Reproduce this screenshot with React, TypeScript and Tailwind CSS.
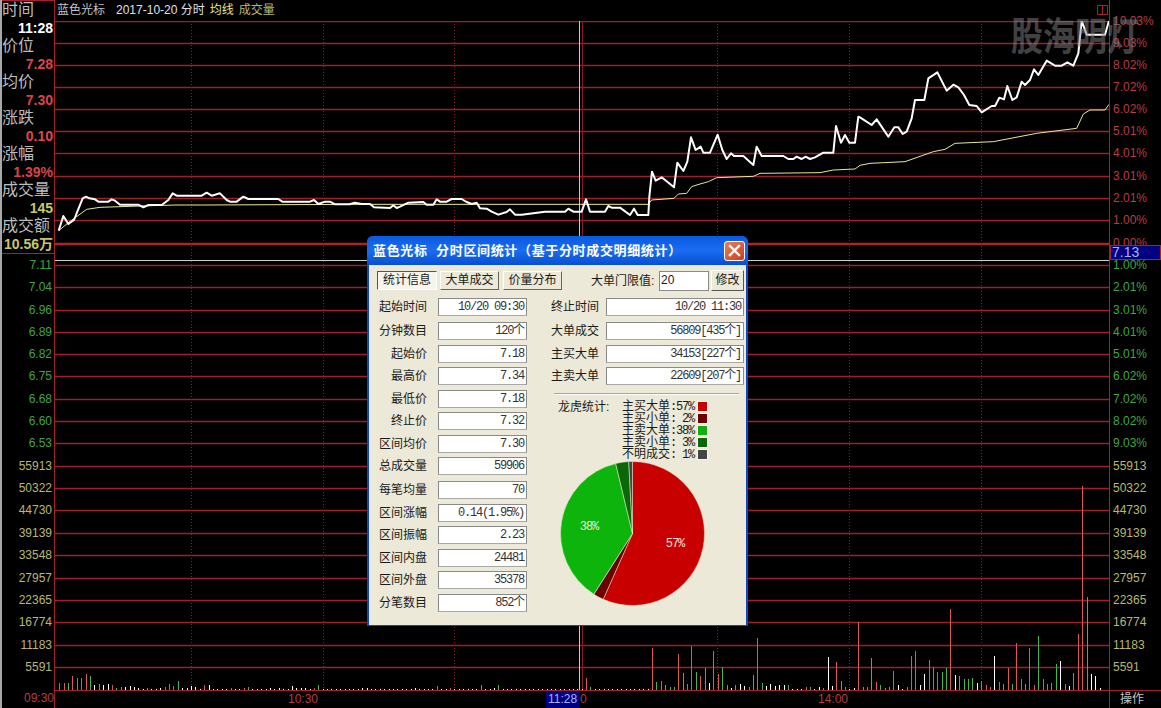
const cjk = { fontFamily: '"Liberation Sans","Noto Sans CJK SC",sans-serif' };

type P = [number, number];
const z = (ox: number, oy: number, a: P[]): P[] => a.map(([x, y]) => [ox + x / 3, oy + y / 3]);

const price: P[] = [
  ...z(0, 0, [[176,692],[190,648],[205,672],[222,660],[232,635],[248,595],[258,590],[268,595],[285,598],[295,605],[325,605],[335,598],[345,602],[360,614],[415,614],[430,622],[445,615],[485,615],[505,600],[518,580],[530,587],[605,587],[620,578],[635,587],[660,580],[680,600],[690,605],[710,605],[730,590],[745,597],[835,597],[847,605],[930,605],[942,600],[955,612],[975,605],[990,605],[1005,613],[1050,613]]),
  ...z(350, 180, [[0,72],[15,68],[35,72],[60,72],[72,82],[120,84],[130,76],[140,84],[150,80],[175,68],[220,66],[230,74],[250,74],[260,58],[270,65],[290,65],[305,57],[335,57],[350,66],[365,72],[380,68],[390,85],[410,86],[425,95],[445,104],[470,96],[480,88],[495,104],[515,104]]),
  ...z(540, 100, [[15,335],[75,335],[85,326],[100,335],[125,335],[138,298],[150,335],[195,335],[205,318],[215,323],[240,323],[270,345],[282,326],[293,345],[325,345],[328,290],[336,215],[347,242],[365,232],[402,262],[412,188],[430,213],[442,185],[453,112],[467,150],[482,140],[490,158],[510,158],[533,104],[547,150],[560,177],[573,160],[582,168],[610,168],[640,195],[650,140],[665,168],[730,168],[745,177],[760,177],[770,170],[785,177],[797,170],[810,177],[825,172],[850,158],[880,158],[888,78],[903,128],[915,105],[928,128],[945,128],[955,50]]),
  ...z(860, 0, [[0,352],[35,375],[50,358],[85,410],[103,382],[115,382],[128,402],[140,395],[155,355],[165,300],[193,300],[205,235],[232,217],[260,272],[280,254],[295,262],[312,285],[328,315],[350,318],[365,337],[395,318],[405,318],[418,293],[432,298],[442,258],[457,300],[470,292],[485,245],[495,255],[510,240],[522,208],[535,225],[560,182],[585,197],[605,197],[622,187],[640,197],[655,160],[665,62],[680,104],[735,104],[747,62]]),
];

const avg: P[] = [
  ...z(0, 0, [[176,692],[205,668],[260,628],[300,622],[420,618],[525,615],[605,615],[1080,613]]),
  ...z(540, 100, [[0,313],[325,313],[335,300],[402,295],[415,282],[440,280],[455,260],[480,252],[505,245],[530,233],[640,229],[660,220],[840,218],[880,210],[945,207],[960,196]]),
  ...z(860, 0, [[30,490],[135,485],[220,455],[255,448],[285,430],[400,425],[530,400],[650,385],[670,342],[690,330],[735,330],[747,313]]),
];

const raw: [number, number, string][] = [
  [0,22,'r'],[1,20,'r'],[2,20,'g'],[3,42,'r'],[4,36,'r'],[5,36,'r'],[6,48,'r'],[7,42,'g'],[8,15,'w'],[9,18,'g'],[10,15,'w'],[11,18,'w'],[12,15,'r'],[13,7,'g'],[14,9,'g'],[15,9,'w'],[16,12,'w'],[17,9,'w'],[18,6,'w'],[20,6,'r'],[23,5,'w'],[24,10,'r'],[25,18,'r'],[26,12,'r'],[27,26,'g'],[28,6,'w'],[29,6,'w'],[30,12,'w'],[31,9,'w'],[33,16,'r'],[34,15,'w'],[39,6,'g'],[42,6,'r'],[43,9,'g'],[48,6,'w'],[50,6,'w'],[53,12,'w'],[54,6,'w'],[55,6,'w'],[56,6,'w'],[58,6,'r'],[59,15,'g'],[69,6,'w'],[70,6,'w'],[81,6,'w'],[86,12,'r'],[89,6,'r'],[96,15,'g'],[99,6,'w'],[100,15,'g'],
  [120,36,'r'],[121,9,'g'],[135,125,'r'],[136,24,'g'],[137,27,'r'],[138,15,'g'],[139,9,'g'],[140,9,'g'],[141,108,'r'],[142,51,'g'],[143,18,'r'],[144,132,'r'],[145,54,'g'],[146,42,'r'],[147,66,'g'],[148,21,'w'],[149,117,'r'],[150,48,'r'],[151,69,'g'],[152,15,'g'],[153,6,'w'],[154,15,'g'],[155,18,'w'],[156,12,'w'],[157,9,'g'],[158,45,'g'],[159,156,'r'],[160,21,'g'],[161,12,'w'],[162,18,'w'],[163,12,'w'],[164,15,'w'],[165,15,'w'],[166,15,'g'],[170,9,'r'],[171,9,'g'],[173,9,'w'],[174,6,'r'],[175,99,'w'],[176,12,'w'],[177,84,'r'],[178,27,'g'],[179,9,'r'],[181,6,'w'],[182,205,'r'],
  [183,9,'g'],[184,9,'g'],[185,96,'g'],[186,24,'r'],[187,15,'g'],[188,6,'g'],[189,9,'g'],[190,57,'r'],[191,15,'w'],[193,9,'r'],[194,102,'r'],[195,117,'r'],[196,15,'w'],[197,48,'w'],[198,90,'r'],[199,69,'r'],[200,54,'r'],[201,54,'g'],[202,66,'g'],[203,243,'r'],[204,45,'w'],[205,42,'g'],[206,33,'g'],[207,33,'g'],[208,36,'g'],[209,21,'w'],[210,27,'g'],[211,15,'r'],[212,9,'r'],[213,102,'w'],[214,24,'r'],[215,18,'g'],[216,66,'r'],[217,18,'g'],[218,141,'r'],[219,33,'r'],[220,18,'g'],[221,126,'r'],[222,15,'r'],[223,162,'g'],[224,33,'r'],[225,18,'r'],[226,21,'g'],[227,78,'g'],[228,87,'w'],[229,18,'r'],[230,12,'w'],[231,51,'g'],[232,168,'r'],[233,612,'r'],[234,279,'g'],[235,48,'w'],[236,42,'w'],[237,6,'w'],
];
const barMap = new Map(raw.map(([i, h, c]) => [i, [h, c] as const]));
const barColor: Record<string, string> = { r: '#e25555', g: '#3fb84f', w: '#ffffff' };
const bars = Array.from({ length: 238 }, (_, i) => {
  const b = barMap.get(i) ?? ([4, 'w'] as const);
  return { x: Math.round(59.3 + 4.39 * i) + 0.5, h: b[0] / 3, c: barColor[b[1]] };
});

const gridY = [21,43,65,87,109,131,153,176,198,220,265,287,310,332,354,376,399,421,443,466,488,510,533,555,578,600,622,645,667];
const dotted = [191,323,454,717,849,981];

const info: [string, string, string][] = [
  ['时间', '11:28', 'text-white'],
  ['价位', '7.28', 'text-[#d8444c]'],
  ['均价', '7.30', 'text-[#d8444c]'],
  ['涨跌', '0.10', 'text-[#e2454c]'],
  ['涨幅', '1.39%', 'text-[#d8444c]'],
  ['成交量', '145', 'text-[#c8c868]'],
  ['成交额', '10.56万', 'text-[#c8c868]'],
];

const leftAxis: [string, string, string][] = [
  ['7.11','h-[22px]','text-[#3fa544]'],['7.04','h-[23px]','text-[#3fa544]'],['6.96','h-[22px]','text-[#3fa544]'],['6.89','h-[22px]','text-[#3fa544]'],['6.82','h-[22px]','text-[#3fa544]'],['6.75','h-[23px]','text-[#3fa544]'],['6.68','h-[22px]','text-[#3fa544]'],['6.60','h-[22px]','text-[#3fa544]'],['6.53','h-[23px]','text-[#3fa544]'],
  ['55913','h-[22px]','text-[#b8b870]'],['50322','h-[22px]','text-[#b8b870]'],['44730','h-[23px]','text-[#b8b870]'],['39139','h-[22px]','text-[#b8b870]'],['33548','h-[23px]','text-[#b8b870]'],['27957','h-[22px]','text-[#b8b870]'],['22365','h-[22px]','text-[#b8b870]'],['16774','h-[23px]','text-[#b8b870]'],['11183','h-[22px]','text-[#b8b870]'],['5591','h-[22px]','text-[#b8b870]'],
];
const rightLower: [string, string, string][] = leftAxis.map((r, i) =>
  i < 9 ? [['1.00%','2.01%','3.01%','4.01%','5.01%','6.02%','7.02%','8.02%','9.03%'][i], r[1], r[2]] : r
);
const rightTop: [string, string][] = [
  ['10.03%','h-[22px]'],['9.03%','h-[22px]'],['8.02%','h-[22px]'],['7.02%','h-[22px]'],['6.02%','h-[22px]'],['5.01%','h-[22px]'],['4.01%','h-[23px]'],['3.01%','h-[22px]'],['2.01%','h-[22px]'],['1.00%','h-[23px]'],['0.00%','h-[12px]'],
];

const leftRows: [string, string, string][] = [
  ['起始时间','10/20 09:30','h-[24px]'],['分钟数目','120个','h-[23px]'],['起始价','7.18','h-[22px]'],['最高价','7.34','h-[23px]'],['最低价','7.18','h-[22px]'],['终止价','7.32','h-[23px]'],['区间均价','7.30','h-[22px]'],['总成交量','59906','h-[24px]'],['每笔均量','70','h-[23px]'],['区间涨幅','0.14(1.95%)','h-[22px]'],['区间振幅','2.23','h-[23px]'],['区间内盘','24481','h-[22px]'],['区间外盘','35378','h-[23px]'],['分笔数目','852个','h-[18px]'],
];
const rightRows: [string, string, string][] = [
  ['终止时间','10/20 11:30','h-[24px]'],['大单成交','56809[435个]','h-[23px]'],['主买大单','34153[227个]','h-[22px]'],['主卖大单','22609[207个]','h-[18px]'],
];
const legend: [string, string][] = [
  ['主买大单:57%','bg-[#c80000]'],['主买小单: 2%','bg-[#6a0000]'],['主卖大单:38%','bg-[#10b010]'],['主卖小单: 3%','bg-[#0a680a]'],['不明成交: 1%','bg-[#444444]'],
];

const CX = 632.5, CY = 532.5, R = 72;
const pol = (deg: number): P => {
  const a = (deg * Math.PI) / 180;
  return [CX + R * Math.sin(a), CY - R * Math.cos(a)];
};
const slice = (a: number, b: number) => {
  const [x1, y1] = pol(a);
  const [x2, y2] = pol(b);
  return `M${CX} ${CY}L${x1} ${y1}A${R} ${R} 0 ${b - a > 180 ? 1 : 0} 1 ${x2} ${y2}Z`;
};

function Field({ v, w }: { v: string; w: string }) {
  return (
    <div
      className={`${w} h-[18px] bg-white border border-[#8a8a8a] border-b-[#a8a8a8] pr-[2px] text-right text-[12px] leading-[16px] tracking-[-1.2px] text-[#333] whitespace-pre`}
      style={{ fontFamily: '"Liberation Mono","Noto Sans CJK SC",monospace' }}
    >
      {v}
    </div>
  );
}

function Tab({ label, w, pressed }: { label: string; w: string; pressed?: boolean }) {
  return (
    <div
      className={`${w} h-[19px] text-center text-[12px] leading-[17px] border ${
        pressed
          ? 'bg-[#f6f4ec] border-t-[#555] border-l-[#555] border-r-white border-b-white'
          : 'bg-[#ece9d8] border-t-white border-l-white border-r-[#666] border-b-[#666]'
      }`}
    >
      {label}
    </div>
  );
}

export default function App() {
  return (
    <div className="relative flex w-[1161px] h-[708px] overflow-hidden bg-black" style={cjk}>
      {/* left column */}
      <aside className="w-[55px] shrink-0 flex flex-col border-l-2 border-l-[#a8a8a8] border-r border-r-[#a8202a]">
        <div className="h-[254px] border-t border-b border-[#a8202a]">
          {info.map(([label, value, color]) => (
            <div key={label}>
              <div className="h-[18px] text-[16px] leading-[18px] text-[#bdbdbd] whitespace-nowrap">{label}</div>
              <div className={`h-[18px] pr-[1px] text-right text-[14px] font-bold leading-[18px] whitespace-nowrap ${color}`}>{value}</div>
            </div>
          ))}
        </div>
        <div className="pt-[6px] h-[436px]">
          {leftAxis.map(([t, h, c]) => (
            <div key={t} className={`${h} pr-[2px] text-right text-[12px] leading-[10px] ${c}`}>{t}</div>
          ))}
        </div>
        <div className="h-[18px] text-right text-[12px] leading-[16px] text-[#b83c42]">09:30</div>
      </aside>

      {/* chart column */}
      <main className="flex-1 flex flex-col min-w-0">
        <div className="h-[21px] flex items-center pl-[2px] pb-[2px] text-[12px] whitespace-pre">
          <span className="text-[#c4c4c4]">蓝色光标</span>
          <span className="ml-[11px] text-[#e0e0e0]">2017-10-20 分时</span>
          <span className="ml-[5px] text-[#e6e68c]">均线</span>
          <span className="ml-[5px] text-[#b8b870]">成交量</span>
        </div>
        <svg className="block w-[1054px] h-[669px]" viewBox="55 21 1054 669">
          {gridY.map((y) => (
            <line key={y} x1={55} x2={1109} y1={y + 0.5} y2={y + 0.5} stroke="#a01e28" strokeWidth={1.5} />
          ))}
          <line x1={55} x2={1109} y1={244} y2={244} stroke="#b0222a" strokeWidth={2.5} />
          {dotted.map((x) => (
            <line key={x} x1={x + 0.5} x2={x + 0.5} y1={21} y2={690} stroke="#8b1a22" strokeDasharray="1 2" />
          ))}
          <line x1={582.5} x2={582.5} y1={21} y2={690} stroke="#8b1a22" />
          {bars.map((b, i) => (
            <line key={i} x1={b.x} x2={b.x} y1={690} y2={690 - b.h} stroke={b.c} shapeRendering="crispEdges" />
          ))}
          <line x1={55} x2={1109} y1={260.5} y2={260.5} stroke="#d0d0d0" />
          <line x1={579.5} x2={579.5} y1={21} y2={690} stroke="#c8c8c8" />
          <polyline points={avg.map((p) => p.join(',')).join(' ')} fill="none" stroke="#e8e89a" strokeWidth={1} />
          <polyline points={price.map((p) => p.join(',')).join(' ')} fill="none" stroke="#ffffff" strokeWidth={2} strokeLinejoin="round" />
        </svg>
        <div className="h-[18px] flex border-t border-[#a8202a] text-[12px] leading-[16px] text-[#b83c42] whitespace-nowrap">
          <span className="ml-[233px] w-[31px]">10:30</span>
          <span className="ml-[227px] w-[33px] h-[17px] bg-[#000080] text-center text-[#a8b4ff]">11:28</span>
          <span className="ml-[1px] w-[7px]">0</span>
          <span className="ml-[231px] w-[31px]">14:00</span>
        </div>
      </main>

      {/* right axis */}
      <aside className="w-[52px] shrink-0 flex flex-col border-l border-[#a8202a] pl-[3px]">
        <div className="h-[245px] pt-[16px] overflow-hidden">
          {rightTop.map(([t, h]) => (
            <div key={t} className={`${h} text-[12px] leading-[10px] text-[#b83c42]`}>{t}</div>
          ))}
        </div>
        <div className="-ml-[3px] h-[15px] bg-[#000080] border border-[#a8202a] pl-[1px] text-[14px] leading-[13px] text-[#a8b4ff]">7.13</div>
        <div className="h-[430px]">
          {rightLower.map(([t, h, c]) => (
            <div key={t} className={`${h} text-[12px] leading-[10px] ${c}`}>{t}</div>
          ))}
        </div>
        <div className="-ml-[3px] h-[18px] border-t border-[#a8202a] pl-[10px] text-[12px] leading-[17px] text-[#c4c4c4]">操作</div>
      </aside>

      {/* small marker */}
      <div className="absolute left-[1097px] top-[5px] w-[11px] h-[10px] border border-[#a8202a] flex justify-center">
        <div className="w-px h-full bg-[#a8202a]" />
      </div>

      {/* watermark */}
      <div className="absolute left-[1011px] top-[15px] text-[32px] leading-[44px] font-bold scale-y-[1.2] text-[rgba(130,130,130,0.52)] whitespace-nowrap pointer-events-none">
        股海明灯
      </div>

      {/* dialog */}
      <div className="absolute left-[367px] top-[236px] w-[381px] h-[390px] flex flex-col rounded-t-[6px] bg-[#0a48c8] px-[2px] pb-[1px]">
        <div className="-mx-[2px] h-[29px] shrink-0 flex items-center justify-between rounded-t-[6px] pl-[6px] pr-[3px] bg-gradient-to-b from-[#0a5ae0] via-[#1a6cf0] to-[#0650d0]">
          <span className="text-[13px] font-bold tracking-[0.65px] text-white whitespace-pre">蓝色光标  分时区间统计（基于分时成交明细统计）</span>
          <span className="w-[21px] h-[20px] flex items-center justify-center rounded-[3px] border border-white bg-gradient-to-br from-[#e8805c] to-[#c83c18]">
            <svg width="13" height="13" viewBox="0 0 13 13">
              <path d="M2 2 L11 11 M11 2 L2 11" stroke="#ffffff" strokeWidth="2.4" strokeLinecap="square" />
            </svg>
          </span>
        </div>
        <div className="flex-1 bg-[#ece9d8] pt-[5px] text-[12px] text-[#1a1a1a]">
          <div className="h-[21px] flex items-center pl-[8px] mb-[7px]">
            <Tab label="统计信息" w="w-[60px]" pressed />
            <div className="ml-[3px]"><Tab label="大单成交" w="w-[59px]" /></div>
            <div className="ml-[4px]"><Tab label="价量分布" w="w-[59px]" /></div>
            <span className="ml-[29px] w-[66px] whitespace-nowrap">大单门限值:</span>
            <div className="ml-[2px] w-[50px] h-[20px] bg-white border border-[#8a8a8a] pl-[1px] text-[12px] leading-[16px]">20</div>
            <div className="ml-[2px] w-[33px] h-[21px] bg-[#ece9d8] border border-t-white border-l-white border-r-[#555] border-b-[#555] text-center leading-[18px]">修改</div>
          </div>
          <div className="flex">
            <div className="w-[158px]">
              {leftRows.map(([l, v, h]) => (
                <div key={l} className={`${h} flex items-start`}>
                  <span className="w-[58px] text-right leading-[18px] whitespace-nowrap">{l}</span>
                  <div className="ml-[11px]"><Field v={v} w="w-[89px]" /></div>
                </div>
              ))}
            </div>
            <div className="ml-[24px] w-[193px]">
              {rightRows.map(([l, v, h]) => (
                <div key={l} className={`${h} flex items-start`}>
                  <span className="w-[48px] leading-[18px] whitespace-nowrap">{l}</span>
                  <div className="ml-[7px]"><Field v={v} w="w-[138px]" /></div>
                </div>
              ))}
              <div className="ml-[3px] mt-[8px] w-[185px] h-[2px] border-t border-b border-t-[#a8a498] border-b-white" />
              <div className="mt-[5px] flex">
                <span className="ml-[7px] w-[64px] leading-[15px] whitespace-nowrap">龙虎统计:</span>
                <div>
                  {legend.map(([t, c]) => (
                    <div key={t} className="h-[12px] flex items-center">
                      <span className="w-[72px] leading-[12px] whitespace-pre" style={{ fontFamily: '"Noto Sans CJK SC","Liberation Mono",monospace' }}>
                        {t.slice(0, 4)}
                        <span className="text-[12px] tracking-[-1.2px]" style={{ fontFamily: '"Liberation Mono",monospace' }}>{t.slice(4)}</span>
                      </span>
                      <span className={`ml-[3px] w-[11px] h-[11px] border border-[#f8f8f0] ${c}`} />
                    </div>
                  ))}
                </div>
              </div>
              <svg className="block ml-[8px] mt-[1px] w-[146px] h-[146px]" viewBox="559 460 146 146">
                <path d={slice(0, 204)} fill="#c80000" stroke="#f0e8c8" strokeWidth="0.5" />
                <path d={slice(204, 212.5)} fill="#6a0000" stroke="#f0e8c8" strokeWidth="0.5" />
                <path d={slice(212.5, 346.5)} fill="#0cb40c" stroke="#e8f0c8" strokeWidth="0.6" />
                <path d={slice(346.5, 357)} fill="#0a680a" stroke="#e8f0c8" strokeWidth="0.5" />
                <path d={slice(357, 360)} fill="#444444" stroke="#f0e8c8" strokeWidth="0.5" />
                <text x={589} y={529} textAnchor="middle" fontSize="12" letterSpacing="-1" fill="#e8f0d8" fontFamily="Liberation Mono, monospace">38%</text>
                <text x={675} y={546} textAnchor="middle" fontSize="12" letterSpacing="-1" fill="#f8e0d8" fontFamily="Liberation Mono, monospace">57%</text>
              </svg>
            </div>
          </div>
        </div>
      </div>
    </div>
  );
}
